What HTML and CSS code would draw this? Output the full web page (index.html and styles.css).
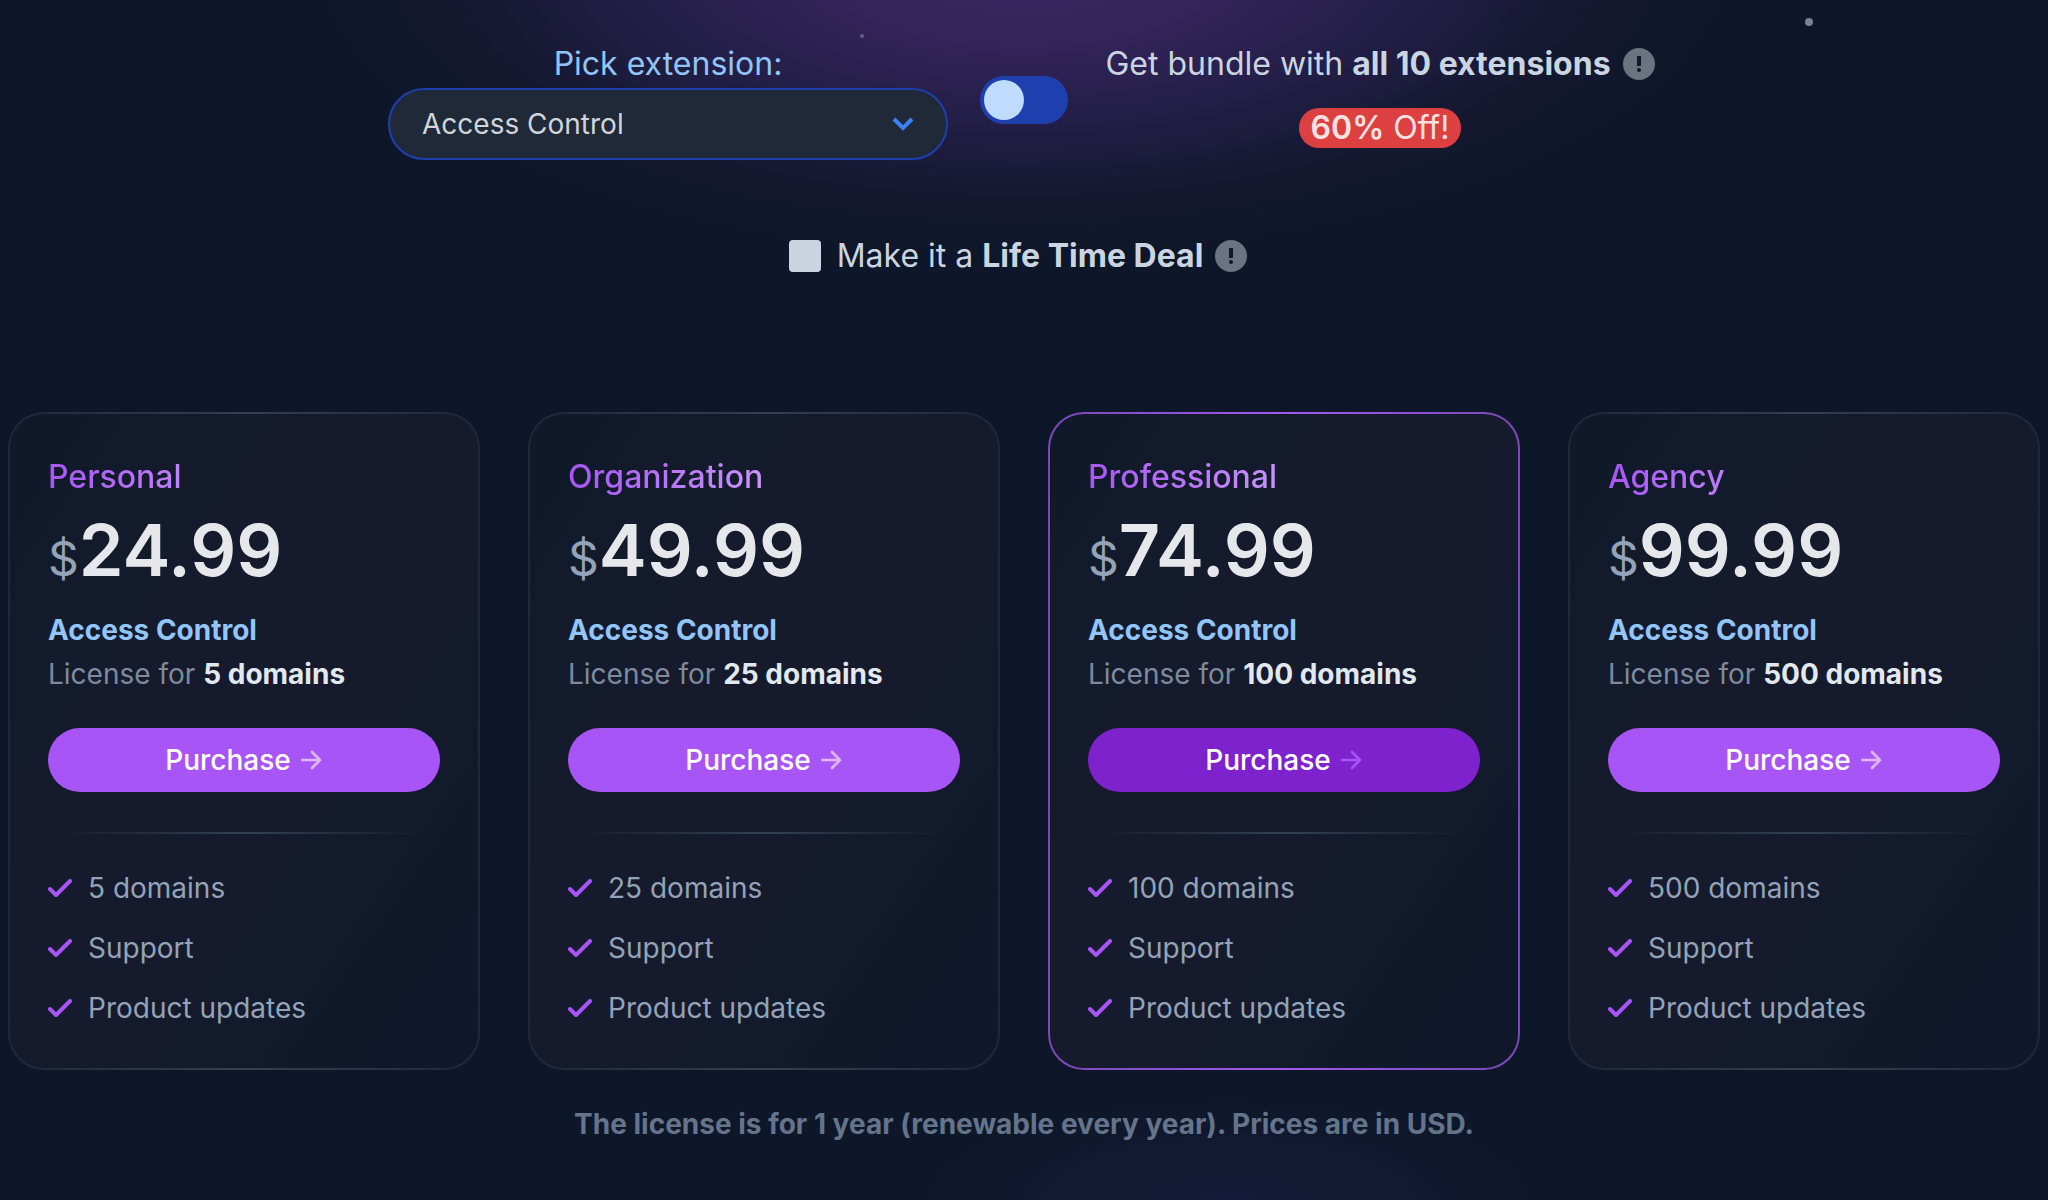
FILE: index.html
```html
<!DOCTYPE html>
<html lang="en">
<head>
    <meta charset="UTF-8">
    <title>Pricing</title>
    <link rel="stylesheet" href="styles.css">
</head>
<body>
    <svg class="sprite" aria-hidden="true">
        <symbol id="check" viewBox="0 0 24 18">
            <path d="M2 10l6 6L22 2" fill="none" stroke="currentColor" stroke-width="4" stroke-linecap="round" stroke-linejoin="round"/>
        </symbol>
        <symbol id="arrow" viewBox="0 0 22 20">
            <path d="M1 10h18M11 2l8 8-8 8" fill="none" stroke="currentColor" stroke-width="2.6" stroke-linecap="round"/>
        </symbol>
        <symbol id="info" viewBox="0 0 32 32">
            <circle cx="16" cy="16" r="16" fill="#6b7280"/>
            <path d="M14 8h4v10h-4z" fill="#0f172a"/>
            <circle cx="16" cy="22" r="2" fill="#0f172a"/>
        </symbol>
    </svg>
    <span class="star star-small"></span>
    <span class="star star-large"></span>

    <main>
        <section class="options">
            <div class="picker">
                <label for="extension">Pick extension:</label>
                <div class="select-wrap">
                    <select id="extension">
                        <option>Access Control</option>
                    </select>
                    <svg class="chevron" viewBox="0 0 22 14" aria-hidden="true">
                        <path d="M2 2l9 9 9-9" fill="none" stroke="currentColor" stroke-width="4"/>
                    </svg>
                </div>
            </div>
            <input class="toggle" type="checkbox" id="bundle">
            <div class="bundle">
                <div class="line">
                    <label for="bundle">Get bundle with <strong>all 10 extensions</strong></label>
                    <svg class="info"><use href="#info"/></svg>
                </div>
                <span class="discount"><strong>60%</strong> Off!</span>
            </div>
        </section>

        <div class="lifetime">
            <input class="checkbox" type="checkbox" id="lifetime">
            <div class="line">
                <label for="lifetime">Make it a <strong>Life Time Deal</strong></label>
                <svg class="info"><use href="#info"/></svg>
            </div>
        </div>

        <section class="plans">
            <article class="card">
                <h2><span>Personal</span></h2>
                <div class="price"><span class="currency">$</span>24.99</div>
                <div class="product">Access Control</div>
                <div class="license">License for <strong>5 domains</strong></div>
                <button class="purchase">Purchase <svg><use href="#arrow"/></svg></button>
                <ul>
                    <li><svg><use href="#check"/></svg>5 domains</li>
                    <li><svg><use href="#check"/></svg>Support</li>
                    <li><svg><use href="#check"/></svg>Product updates</li>
                </ul>
            </article>
            <article class="card">
                <h2><span>Organization</span></h2>
                <div class="price"><span class="currency">$</span>49.99</div>
                <div class="product">Access Control</div>
                <div class="license">License for <strong>25 domains</strong></div>
                <button class="purchase">Purchase <svg><use href="#arrow"/></svg></button>
                <ul>
                    <li><svg><use href="#check"/></svg>25 domains</li>
                    <li><svg><use href="#check"/></svg>Support</li>
                    <li><svg><use href="#check"/></svg>Product updates</li>
                </ul>
            </article>
            <article class="card featured">
                <h2><span>Professional</span></h2>
                <div class="price"><span class="currency">$</span>74.99</div>
                <div class="product">Access Control</div>
                <div class="license">License for <strong>100 domains</strong></div>
                <button class="purchase">Purchase <svg><use href="#arrow"/></svg></button>
                <ul>
                    <li><svg><use href="#check"/></svg>100 domains</li>
                    <li><svg><use href="#check"/></svg>Support</li>
                    <li><svg><use href="#check"/></svg>Product updates</li>
                </ul>
            </article>
            <article class="card">
                <h2><span>Agency</span></h2>
                <div class="price"><span class="currency">$</span>99.99</div>
                <div class="product">Access Control</div>
                <div class="license">License for <strong>500 domains</strong></div>
                <button class="purchase">Purchase <svg><use href="#arrow"/></svg></button>
                <ul>
                    <li><svg><use href="#check"/></svg>500 domains</li>
                    <li><svg><use href="#check"/></svg>Support</li>
                    <li><svg><use href="#check"/></svg>Product updates</li>
                </ul>
            </article>
        </section>

        <p class="note">The license is for 1 year (renewable every year). Prices are in USD.</p>
    </main>
</body>
</html>
```
FILE: styles.css
```css
* {
    box-sizing: border-box;
}
body {
    margin: 0;
    min-height: 100vh;
    font-family: Inter, sans-serif;
    font-size: 28px;
    line-height: 44px;
    color: #94a3b8;
    background-color: #0e1729;
    background-image:
        radial-gradient(ellipse 720px 300px at 50% -40px, #3a2663 0%, #35245b 25%, #241f49 52%, #14182f 80%, #0e172900 100%),
        radial-gradient(ellipse 330px 110px at 60% 100%, #151b38 0%, #11182f 60%, #0e172900 100%);
    background-repeat: no-repeat;
}
strong {
    font-weight: 700;
}
.sprite {
    position: absolute;
    width: 0;
    height: 0;
}
.star {
    position: absolute;
    border-radius: 50%;
}
.star-small {
    left: 42%;
    top: 34px;
    width: 4px;
    height: 4px;
    background-color: #655985;
}
.star-large {
    right: 235px;
    top: 18px;
    width: 8px;
    height: 8px;
    background-color: #7b8290;
}
main {
    padding: 40px 8px 0;
}
.options {
    display: grid;
    grid-template-columns: 560px 88px 560px;
    gap: 32px;
    justify-content: center;
    font-size: 32px;
    line-height: 48px;
    color: #cbd5e1;
}
.picker {
    text-align: center;
    color: #93c5fd;
}
.picker label {
    display: block;
}
.select-wrap {
    position: relative;
}
select {
    display: block;
    width: 100%;
    height: 72px;
    padding: 0 32px;
    font: inherit;
    font-size: 28px;
    color: #d1d5db;
    background-color: #1f2937;
    border: 2px solid #1e40af;
    border-radius: 36px;
    appearance: none;
}
.chevron {
    position: absolute;
    top: 29px;
    right: 34px;
    width: 22px;
    height: 14px;
    color: #3b82f6;
    pointer-events: none;
}
.toggle {
    align-self: center;
    width: 88px;
    height: 48px;
    margin: 0;
    padding: 4px;
    background-color: #1e40af;
    border-radius: 24px;
    appearance: none;
}
.toggle::before {
    content: "";
    display: block;
    width: 40px;
    height: 40px;
    background-color: #bfdbfe;
    border-radius: 50%;
}
.toggle:checked::before {
    margin-left: auto;
}
.bundle {
    display: flex;
    flex-direction: column;
    align-items: center;
    gap: 20px;
}
.line {
    display: flex;
    align-items: center;
    gap: 12px;
}
.info {
    width: 32px;
    height: 32px;
}
.discount {
    padding: 0 12px;
    line-height: 40px;
    color: #fee2e2;
    background-color: #dc4040;
    border-radius: 20px;
}
.discount strong {
    font-weight: 600;
}
.lifetime {
    display: flex;
    justify-content: center;
    align-items: center;
    gap: 16px;
    margin-top: 72px;
    padding-right: 12px;
    font-size: 32px;
    line-height: 48px;
    color: #cbd5e1;
}
.checkbox {
    width: 32px;
    height: 32px;
    margin: 0;
    background-color: #cbd5e1;
    border-radius: 4px;
    appearance: none;
}
.checkbox:checked {
    background-color: #3b82f6;
}
.plans {
    display: grid;
    grid-template-columns: repeat(4, 1fr);
    gap: 48px;
    margin-top: 132px;
}
.card {
    padding: 38px 38px 40px;
    border: 2px solid transparent;
    border-radius: 36px;
    background:
        linear-gradient(125deg, #0f192a 0%, #151b2c 35%, #151b2c 60%, #0f192a 85%, #10172a 100%) padding-box,
        linear-gradient(90deg, #1f2838 0%, #363f4f 50%, #1f2838 100%) border-box;
}
.featured {
    background:
        linear-gradient(125deg, #0f192a 0%, #151b2c 35%, #151b2c 60%, #0f192a 85%, #10172a 100%) padding-box,
        linear-gradient(90deg, #7b48b5 0%, #a259ee 50%, #7b48b5 100%) border-box;
}
.card h2 {
    margin: 0 0 12px;
    font-size: 32px;
    font-weight: 500;
    line-height: 50px;
}
.card h2 span {
    display: block;
    color: transparent;
    background: linear-gradient(90deg, #a855f7, #e9d5ff);
    background-clip: text;
}
.price {
    margin-bottom: 22px;
    font-size: 72px;
    font-weight: 600;
    line-height: 72px;
    color: #e5e7eb;
}
.currency {
    font-size: 48px;
    font-weight: 400;
    line-height: 48px;
    color: #94a3b8;
}
.product {
    font-weight: 700;
    color: #93c5fd;
}
.license {
    color: #7f8a9c;
}
.license strong {
    color: #e2e8f0;
}
.purchase {
    display: flex;
    align-items: center;
    justify-content: center;
    gap: 10px;
    width: 100%;
    height: 64px;
    margin: 32px 0 40px;
    font: inherit;
    font-weight: 500;
    color: #fff;
    background-color: #a855f7;
    border: 0;
    border-radius: 32px;
    cursor: pointer;
}
.purchase svg {
    width: 22px;
    height: 20px;
    color: #dcb8fc;
}
.featured .purchase {
    background-color: #7e22ce;
}
.featured .purchase svg {
    color: #a855f7;
}
.card ul {
    display: flex;
    flex-direction: column;
    gap: 20px;
    margin: 0;
    padding: 36px 0 0;
    line-height: 40px;
    list-style: none;
    background: linear-gradient(90deg, #33415500 3%, #334155 50%, #33415500 97%) top / 100% 2px no-repeat;
}
.card li {
    display: flex;
    align-items: center;
    gap: 16px;
}
.card li svg {
    width: 24px;
    height: 18px;
    color: #a855f7;
}
.note {
    margin: 32px 0 0;
    font-weight: 700;
    text-align: center;
    color: #64748b;
}
```
